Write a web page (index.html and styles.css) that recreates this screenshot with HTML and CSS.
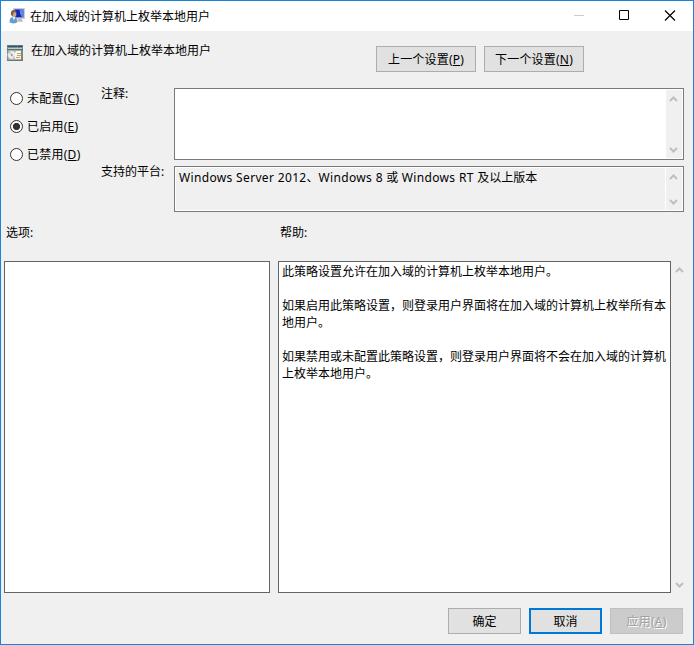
FILE: index.html
```html
<!DOCTYPE html>
<html lang="zh-CN">
<head>
<meta charset="utf-8">
<title>在加入域的计算机上枚举本地用户</title>
<link rel="stylesheet" href="styles.css">
</head>
<body>
<div class="window">
  <header class="titlebar">
    <svg class="app-icon" width="16" height="16" viewBox="0 0 16 16">
      <path d="M4.5.5h11v10.2h-11z" fill="#d9dadc" stroke="#b4b6ba" stroke-width=".6"/>
      <path d="M5.5 1.4h9v8h-9z" fill="#1226b4"/>
      <path d="M10.5 1.4h4v8h-1.5L11 5.5Z" fill="#5f86e6"/>
      <path d="M9 10.8h4v1.7l1.6 1.3H8Z" fill="#b9bbbd"/>
      <path d="M.6 14.6C.3 11 1.5 9 4.3 9S8.4 11 8.2 14.2C6.2 15.6 3 15.8.6 14.6Z" fill="#5f9fd6"/>
      <path d="M3.4 9 5 12.2 6.4 9Z" fill="#eef6fc"/>
      <ellipse cx="5" cy="5.9" rx="2.4" ry="3.1" fill="#d0a47c"/>
      <path d="M2 7C1.3 3.4 2.8 1.8 5 2c1.4.1 2.2 1 2.4 2.2L4.6 4.6 3.6 8.2Z" fill="#6c6560"/>
    </svg>
    <h1 class="caption">在加入域的计算机上枚举本地用户</h1>
    <div class="window-controls">
      <svg width="104" height="12" viewBox="0 0 104 12">
        <path d="M0 5.5h10" stroke="#ccc"/>
        <path d="M45.5 .5h9v9h-9z" class="glyph-max"/>
        <path d="M91 .5l10 10m0-10l-10 10" stroke="#000" stroke-width="1.15"/>
      </svg>
    </div>
  </header>

  <section class="policy">
    <svg class="policy-icon" width="16" height="16" viewBox="0 0 16 16">
      <path d="M0 0h16v16H0z" fill="#858a8a"/>
      <path d="M0 0h16v2H0z" fill="#4f8484"/>
      <path d="M1 1h9v1H1z" fill="#33586c"/>
      <path d="M11 1h4v1h-4z" fill="#2d3f6d"/>
      <path d="M1 3h14v1H1z" fill="#c4cac8"/>
      <path d="M0 4h16v1H0z" fill="#4b6f73"/>
      <path d="M1 5h13v10H1z" fill="#a9adab"/>
      <circle cx="4.8" cy="10" r="4.2" fill="#eceeed" stroke="#a6a8a6" stroke-width=".6"/>
      <path d="M4.8 10 1.4 8 3 6.2Z" fill="#a8d8bb"/>
      <path d="M4.8 10 8 12.2 6.3 13.8Z" fill="#cfc4e4"/>
      <circle cx="4.8" cy="10" r="1" fill="#8d918f"/>
      <path d="M9 6h5v8H8V8Z" fill="#fbf6dc"/>
      <path d="M10 8.5h4M10 10.5h4M9 12.5h4" stroke="#b39c68" stroke-width=".9"/>
      <path d="M14 5h2v11h-2z" fill="#6f8b8b"/>
      <path d="M14 13h2v2h-2z" fill="#a9705f"/>
      <path d="M0 15h16v1H0z" fill="#5d7d7d"/>
    </svg>
    <div class="policy-name">在加入域的计算机上枚举本地用户</div>
    <div class="policy-nav">
      <button class="btn btn-nav">上一个设置(<u>P</u>)</button>
      <button class="btn btn-nav">下一个设置(<u>N</u>)</button>
    </div>
  </section>

  <section class="config">
    <div class="states">
      <label class="state"><span class="radio"></span>未配置(<u>C</u>)</label>
      <label class="state"><span class="radio checked"></span>已启用(<u>E</u>)</label>
      <label class="state"><span class="radio"></span>已禁用(<u>D</u>)</label>
    </div>
    <div class="fields">
      <div class="field-label">注释:</div>
      <div class="box comment">
        <div class="box-text"></div>
        <div class="scrollbar">
          <svg width="9" height="6" viewBox="0 0 9 6"><path class="chevron" d="M1 5 4.5 1.5 8 5"/></svg>
          <svg width="9" height="6" viewBox="0 0 9 6"><path class="chevron" d="M1 1 4.5 4.5 8 1"/></svg>
        </div>
      </div>
      <div class="field-label">支持的平台:</div>
      <div class="box platform">
        <div class="box-text"><span class="latin">Windows Server 2012</span>、<span class="latin">Windows 8 </span>或<span class="latin"> Windows RT </span>及以上版本</div>
        <div class="scrollbar">
          <svg width="9" height="6" viewBox="0 0 9 6"><path class="chevron" d="M1 5 4.5 1.5 8 5"/></svg>
          <svg width="9" height="6" viewBox="0 0 9 6"><path class="chevron" d="M1 1 4.5 4.5 8 1"/></svg>
        </div>
      </div>
    </div>
  </section>

  <section class="panes">
    <div class="pane-label">选项:</div>
    <div class="pane-label">帮助:</div>
    <div class="pane"></div>
    <div class="pane help">
      <p>此策略设置允许在加入域的计算机上枚举本地用户。</p>
      <p>如果启用此策略设置，则登录用户界面将在加入域的计算机上枚举所有本地用户。</p>
      <p>如果禁用或未配置此策略设置，则登录用户界面将不会在加入域的计算机上枚举本地用户。</p>
    </div>
    <div class="scrollbar pane-scroll">
      <svg width="9" height="6" viewBox="0 0 9 6"><path class="chevron" d="M1 5 4.5 1.5 8 5"/></svg>
      <svg width="9" height="6" viewBox="0 0 9 6"><path class="chevron" d="M1 1 4.5 4.5 8 1"/></svg>
    </div>
  </section>

  <footer class="actions">
    <button class="btn">确定</button>
    <button class="btn btn-default">取消</button>
    <button class="btn btn-disabled" disabled>应用(<u>A</u>)</button>
  </footer>
</div>
</body>
</html>
```
FILE: styles.css
```css
* { box-sizing: border-box; }

body {
  margin: 0;
  color: #000;
  font: 12px/17px "Noto Sans", "Noto Sans CJK SC", sans-serif;
}

.window {
  display: flex;
  flex-direction: column;
  width: 694px;
  height: 645px;
  border: 1px solid #1883d7;
  background: #f0f0f0;
}

svg { display: block; flex: none; }

u {
  text-underline-offset: 1px;
  text-decoration-thickness: 1px;
  text-decoration-skip-ink: none;
}

/* Title bar */
.titlebar {
  display: flex;
  align-items: center;
  height: 30px;
  padding-left: 8px;
  background: #fff;
}
.caption { margin: 0 0 0 5px; font-size: 12px; font-weight: 400; line-height: 17px; }
.window-controls { margin-left: auto; padding-right: 15px; }
.glyph-max { fill: none; stroke: #000; }

/* Policy header */
.policy {
  display: flex;
  align-items: flex-start;
  height: 57px;
  padding: 14px 0 0 6px;
}
.policy-name { width: 345px; margin: -3px 0 0 8px; }
.policy-nav { display: flex; gap: 8px; margin-top: 1px; }

.btn {
  width: 73px;
  height: 26px;
  padding: 0;
  border: 1px solid #adadad;
  background: #e1e1e1;
  color: #000;
  font: inherit;
}
.btn-nav { width: 100px; letter-spacing: 0.2px; }
.btn-default { border: 2px solid #0078d7; }
.btn-disabled {
  border-color: #bfbfbf;
  background: #ccc;
  color: #a0a0a0;
  letter-spacing: 0.2px;
  text-shadow: 1px 1px 0 #fff;
}

/* State and fields */
.config { display: flex; height: 124px; }
.states {
  display: flex;
  flex-direction: column;
  gap: 11px;
  width: 100px;
  padding: 2px 0 0 9px;
}
.state { display: flex; align-items: center; letter-spacing: 0.25px; }
.radio {
  width: 13px;
  height: 13px;
  margin-right: 4px;
  border: 1px solid #333;
  border-radius: 50%;
  background: #fff;
}
.radio.checked { background: radial-gradient(circle, #333 3.3px, #fff 3.9px); }

.fields {
  display: grid;
  grid-template-columns: 73px 510px;
  grid-template-rows: 72px 46px;
  row-gap: 6px;
}
.field-label { margin-top: -3px; }
.box {
  display: flex;
  padding: 1px;
  border: 1px solid #7a7a7a;
  background: #fff;
}
.box-text { flex: 1; padding: 1px 3px; }
.latin { letter-spacing: 0.34px; white-space: pre; }
.scrollbar {
  display: flex;
  flex-direction: column;
  align-items: center;
  justify-content: space-between;
  width: 16px;
  padding: 6px 0 5px;
  background: #f0f0f0;
}
.box .scrollbar { padding-right: 1px; }
.platform .box-text { margin-right: 1px; background: #f0f0f0; }
.chevron { fill: none; stroke: #bfbfbf; stroke-width: 2; }

/* Option and help panes */
.panes {
  display: grid;
  grid-template-columns: 274px 393px 17px;
  grid-template-rows: 49px 332px;
  padding-left: 3px;
}
.pane-label { padding: 12px 0 0 2px; }
.pane-label + .pane-label { grid-column: 2 / 4; }
.pane {
  width: 266px;
  border: 1px solid #646464;
  background: #fff;
}
.help { width: 393px; padding: 1px 3px; }
.help p { margin: 0 0 17px; word-break: break-all; }
.pane-scroll { width: 17px; }

/* Actions */
.actions {
  display: flex;
  justify-content: flex-end;
  gap: 8px;
  padding: 15px 10px 0 0;
}
```
